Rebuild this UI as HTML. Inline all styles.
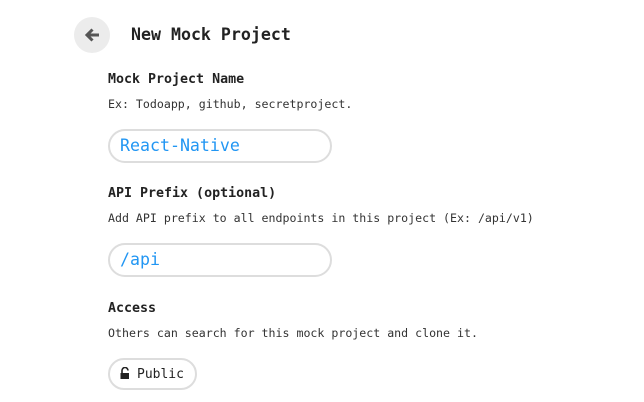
<!DOCTYPE html>
<html><head><style>
body{margin:0;width:644px;height:402px;background:#fff;font-family:"DejaVu Sans Mono","Liberation Mono",monospace;color:#222;position:relative;overflow:hidden}
.a{position:absolute;white-space:nowrap;line-height:1}
.back{position:absolute;left:74px;top:17px;width:36px;height:36px;border-radius:50%;background:#ececec}
.t{font-size:16.6px;font-weight:bold;left:131px;top:27px}
.l{font-size:13.3px;font-weight:bold;left:108px}
.d{font-size:11.6px;left:108px;color:#333}
.in{position:absolute;left:108px;width:220px;height:30px;border:2px solid #ddd;border-radius:17px}
.in span{position:absolute;left:10px;top:7px;font-size:16.6px;color:#2196f3;line-height:1}
.pill{position:absolute;left:108px;top:358px;width:85px;height:28px;border:2px solid #ddd;border-radius:16px}
</style></head><body>
<div class="back"><svg width="36" height="36" viewBox="0 0 36 36"><path d="M25 18H13M18.5 12.5L13 18l5.5 5.5" stroke="#555" stroke-width="3" fill="none"/></svg></div>
<div class="a t">New Mock Project</div>
<div class="a l" style="top:73px">Mock Project Name</div>
<div class="a d" style="top:99px">Ex: Todoapp, github, secretproject.</div>
<div class="in" style="top:129px"><span>React-Native</span></div>
<div class="a l" style="top:187px">API Prefix (optional)</div>
<div class="a d" style="top:213px">Add API prefix to all endpoints in this project (Ex: /api/v1)</div>
<div class="in" style="top:243px"><span>/api</span></div>
<div class="a l" style="top:302px">Access</div>
<div class="a d" style="top:328px">Others can search for this mock project and clone it.</div>
<div class="pill"><svg style="position:absolute;left:10px;top:7px" width="10" height="12" viewBox="0 0 10 12"><path d="M2 6V3.5a3 3 0 0 1 6 0" stroke="#222" stroke-width="1.6" fill="none"/><rect x="0.5" y="6" width="8.5" height="6" fill="#222"/></svg><span class="a" style="left:27px;top:8px;font-size:13px">Public</span></div>
</body></html>
